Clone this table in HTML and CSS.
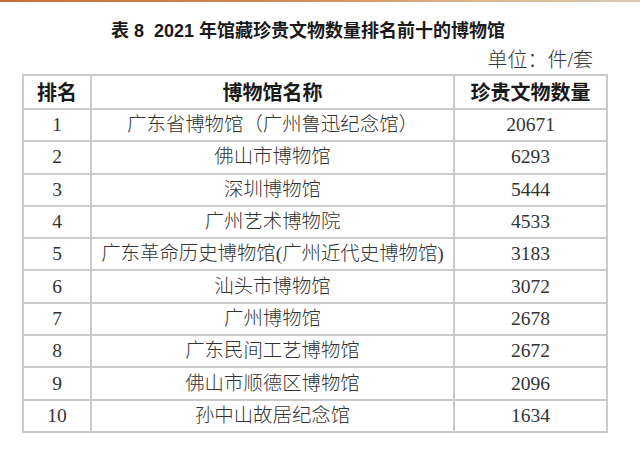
FILE: index.html
```html
<!DOCTYPE html>
<html lang="zh-CN">
<head>
<meta charset="utf-8">
<title>表 8 2021 年馆藏珍贵文物数量排名前十的博物馆</title>
<link rel="stylesheet" href="styles.css">
</head>
<body>
<div class="topline"></div>
<div class="wrap">
  <h1 class="title">表 8&nbsp; 2021 年馆藏珍贵文物数量排名前十的博物馆</h1>
  <div class="unit">单位：件/套</div>
  <table class="rank">
    <colgroup>
      <col class="c-rank">
      <col class="c-name">
      <col class="c-num">
    </colgroup>
    <thead>
      <tr><th>排名</th><th>博物馆名称</th><th>珍贵文物数量</th></tr>
    </thead>
    <tbody>
      <tr><td class="num">1</td><td>广东省博物馆（广州鲁迅纪念馆）</td><td class="num">20671</td></tr>
      <tr><td class="num">2</td><td>佛山市博物馆</td><td class="num">6293</td></tr>
      <tr><td class="num">3</td><td>深圳博物馆</td><td class="num">5444</td></tr>
      <tr><td class="num">4</td><td>广州艺术博物院</td><td class="num">4533</td></tr>
      <tr><td class="num">5</td><td>广东革命历史博物馆(广州近代史博物馆)</td><td class="num">3183</td></tr>
      <tr><td class="num">6</td><td>汕头市博物馆</td><td class="num">3072</td></tr>
      <tr><td class="num">7</td><td>广州博物馆</td><td class="num">2678</td></tr>
      <tr><td class="num">8</td><td>广东民间工艺博物馆</td><td class="num">2672</td></tr>
      <tr><td class="num">9</td><td>佛山市顺德区博物馆</td><td class="num">2096</td></tr>
      <tr><td class="num">10</td><td>孙中山故居纪念馆</td><td class="num">1634</td></tr>
    </tbody>
  </table>
</div>
</body>
</html>
```
FILE: styles.css
```css
html, body {
  margin: 0;
  padding: 0;
  background: #ffffff;
}

.topline {
  height: 2px;
  background: linear-gradient(to right, #c86f35 0%, #d08a55 45%, #dcb68e 75%, #d9c7b3 100%);
}

.wrap {
  margin-left: 22px;
  width: 584px;
}

.title {
  margin: 17px 0 0 0;
  font-family: "Liberation Sans", "Noto Sans CJK SC", sans-serif;
  font-weight: bold;
  font-size: 18px;
  line-height: 24px;
  color: #1a1a1a;
  text-align: center;
  padding-right: 12px;
}

.unit {
  margin-top: 6px;
  padding-right: 13px;
  text-align: right;
  font-family: "Liberation Serif", "Noto Sans CJK SC", serif;
  font-weight: 300;
  font-size: 20px;
  line-height: 22px;
  color: #383838;
}

.rank {
  margin-top: 3px;
  width: 584px;
  border-collapse: collapse;
  table-layout: fixed;
  font-family: "Liberation Serif", "Noto Sans CJK SC", serif;
  color: #333333;
}

.c-rank { width: 68px; }
.c-name { width: 363px; }
.c-num { width: 153px; }

.rank th,
.rank td {
  border: 2px solid #cbcbcb;
  padding: 0;
  text-align: center;
  vertical-align: middle;
  white-space: nowrap;
}

.rank th {
  height: 32px;
  font-family: "Noto Sans CJK SC", sans-serif;
  font-weight: bold;
  font-size: 20px;
  line-height: 24px;
  color: #1a1a1a;
}

.rank td {
  height: 30.3px;
  font-size: 19.4px;
  font-weight: 300;
  line-height: 24px;
}

.rank td.num {
  font-family: "Liberation Serif", serif;
  font-size: 19.5px;
}
```
